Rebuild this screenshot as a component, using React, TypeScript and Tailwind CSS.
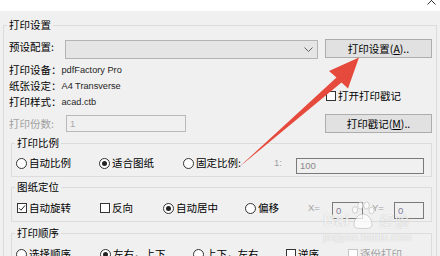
import React from 'react'

function GroupBox({ title, className, children }: { title: string; className?: string; children: React.ReactNode }) {
  return (
    <fieldset className={`border border-[#dcdcdc] ${className ?? ''}`}>
      <legend className="ml-[3px] px-[2px] leading-[12px]">{title}</legend>
      {children}
    </fieldset>
  )
}

function Radio({ label, checked, className }: { label: string; checked?: boolean; className?: string }) {
  return (
    <div className={`flex items-center h-[12px] shrink-0 ${className ?? ''}`}>
      <span className="w-[11px] h-[11px] rounded-full border border-[#333333] bg-white flex items-center justify-center shrink-0">
        {checked && <span className="w-[5px] h-[5px] rounded-full bg-[#222222]" />}
      </span>
      <span className="ml-[2px] whitespace-nowrap">{label}</span>
    </div>
  )
}

function Check({ label, checked, disabled, className }: { label: string; checked?: boolean; disabled?: boolean; className?: string }) {
  return (
    <div className={`flex items-center h-[12px] shrink-0 ${className ?? ''}`}>
      <span
        className={`w-[10px] h-[10px] border bg-white flex items-center justify-center shrink-0 ${
          disabled ? 'border-[#c4c4c4]' : 'border-[#333333]'
        }`}
      >
        {checked && (
          <svg width="8" height="8" viewBox="0 0 8 8">
            <path d="M1 4.2 L3 6.2 L7 1.5" fill="none" stroke="#222" strokeWidth="1" />
          </svg>
        )}
      </span>
      <span className={`ml-[2px] whitespace-nowrap ${disabled ? 'text-[#a0a0a0]' : ''}`}>{label}</span>
    </div>
  )
}

function Button({ children, className }: { children: React.ReactNode; className?: string }) {
  return (
    <div
      className={`w-[107px] h-[19px] bg-[#e1e1e1] border border-[#adadad] flex items-center justify-center whitespace-nowrap ${
        className ?? ''
      }`}
    >
      {children}
    </div>
  )
}

function InfoLine({ label, value }: { label: string; value: string }) {
  return (
    <div className="h-[16px] flex items-center whitespace-nowrap">
      <span>{label}</span>
      <span className="font-['Liberation_Sans',Arial,sans-serif] text-[9.2px] text-[#1f1f1f]">{value}</span>
    </div>
  )
}

export default function App() {
  return (
    <div className="relative w-[440px] h-[256px] overflow-hidden bg-[#f0f0f0] text-black text-[10.5px] leading-[12px] font-['Noto_Sans_CJK_SC',sans-serif]">
      {/* title bar bottom */}
      <div className="h-[11px] bg-white flex justify-end pr-[4px]">
        <svg width="9" height="5" viewBox="0 0 9 5">
          <path d="M0.5 -3.5 L8.5 4.5 M8.5 -3.5 L0.5 4.5" stroke="#333" strokeWidth="1" />
        </svg>
      </div>

      <div className="px-[3px] pt-[8px]">
        <GroupBox title="打印设置" className="pb-[20px]">
          {/* preset row */}
          <div className="flex items-start mt-[8px] pl-[5px]">
            <div className="w-[56px] pt-[2px] whitespace-nowrap">预设配置:</div>
            <div className="w-[253px] h-[19px] mt-[1px] bg-[#e5e5e5] border border-[#b4b4b4] flex items-center justify-end pr-[4px]">
              <svg width="9" height="5" viewBox="0 0 9 5">
                <path d="M0.5 0.5 L4.5 4.5 L8.5 0.5" fill="none" stroke="#606060" strokeWidth="1" />
              </svg>
            </div>
            <Button className="ml-[7px]">
              打印设置(<span className="underline underline-offset-1">A</span>)..
            </Button>
          </div>

          {/* device info */}
          <div className="flex mt-[3px] pl-[5px] pr-[4px]">
            <div className="flex-1">
              <InfoLine label="打印设备：" value="pdfFactory Pro" />
              <InfoLine label="纸张设定：" value="A4 Transverse" />
              <InfoLine label="打印样式：" value="acad.ctb" />
              <div className="mt-[5px] h-[17px] flex items-center text-[#a0a0a0]">
                <span className="w-[57px] whitespace-nowrap">打印份数:</span>
                <div className="w-[120px] h-[17px] border border-[#b9b9b9] flex items-center pl-[3px] font-['Liberation_Sans',Arial,sans-serif] text-[9.5px] text-[#a8a8a8]">
                  1
                </div>
              </div>
            </div>
            <div className="w-[107px]">
              <Check label="打开打印戳记" className="mt-[28px] ml-[1px]" />
              <Button className="mt-[12px] h-[18px]">
                打印戳记(<span className="underline underline-offset-1">M</span>)..
              </Button>
            </div>
          </div>

          {/* scale */}
          <GroupBox title="打印比例" className="mt-[4px] ml-[7px] mr-[4px] pb-[2px]">
            <div className="flex items-start mt-[8px] pl-[4px]">
              <Radio label="自动比例" className="w-[83px]" />
              <Radio label="适合图纸" checked className="w-[84px]" />
              <Radio label="固定比例:" className="w-[91px]" />
              <span className="w-[22px] font-['Liberation_Sans',Arial,sans-serif] text-[9.5px] text-[#a0a0a0]">1:</span>
              <div className="w-[128px] h-[16px] mt-[1px] border border-[#7a7a7a] flex items-center pl-[3px] font-['Liberation_Sans',Arial,sans-serif] text-[9.5px] text-[#8a8a8a]">
                100
              </div>
            </div>
          </GroupBox>

          {/* position */}
          <GroupBox title="图纸定位" className="mt-[4px] ml-[7px] mr-[4px] pb-[2px]">
            <div className="flex items-start mt-[9px] pl-[5px]">
              <Check label="自动旋转" checked className="w-[83px]" />
              <Check label="反向" className="w-[63px]" />
              <Radio label="自动居中" checked className="w-[82px]" />
              <Radio label="偏移" className="w-[63px]" />
              <span className="w-[24px] font-['Liberation_Sans',Arial,sans-serif] text-[9.5px] text-[#a0a0a0]">X=</span>
              <div className="w-[31px] h-[17px] border border-[#7a7a7a] flex items-center pl-[3px] font-['Liberation_Sans',Arial,sans-serif] text-[9.5px] text-[#7f7f9a]">
                0
              </div>
              <span className="w-[31px] pl-[9px] font-['Liberation_Sans',Arial,sans-serif] text-[9.5px] text-[#a0a0a0]">Y=</span>
              <div className="w-[30px] h-[17px] border border-[#7a7a7a] flex items-center pl-[3px] font-['Liberation_Sans',Arial,sans-serif] text-[9.5px] text-[#7f7f9a]">
                0
              </div>
            </div>
          </GroupBox>

          {/* order */}
          <GroupBox title="打印顺序" className="mt-[5px] ml-[7px] mr-[4px] pb-[10px]">
            <div className="flex items-start mt-[9px] pl-[4px]">
              <Radio label="选择顺序" className="w-[84px]" />
              <Radio label="左右，上下" checked className="w-[93px]" />
              <Radio label="上下，左右" className="w-[93px]" />
              <Check label="逆序" className="w-[62px]" />
              <Check label="逐份打印" disabled />
            </div>
          </GroupBox>
        </GroupBox>
      </div>

      {/* annotation arrow */}
      <svg className="absolute inset-0 pointer-events-none" width="440" height="256" viewBox="0 0 440 256">
        <polygon points="238,168 336.5,77.5 329,71 359,57.5 348,88.5 341.5,82.5" fill="#e64a3c" />
      </svg>

      {/* watermark */}
      <div className="absolute left-[323px] top-[200px] pointer-events-none text-white/80 [text-shadow:0_0_1px_rgba(0,0,0,0.25)]">
        <div className="flex items-end h-[29px]">
          <span className="font-['Liberation_Sans',Arial,sans-serif] font-bold text-[17px] leading-[17px]">Bai</span>
          <div className="w-[28px] h-[28px]">
            <svg width="28" height="28" viewBox="0 0 28 28" className="opacity-70">
              <ellipse cx="6" cy="9" rx="2.6" ry="3.3" fill="white" stroke="#a0a0a0" strokeWidth="0.6" />
              <ellipse cx="11.5" cy="4.5" rx="2.8" ry="3.5" fill="white" stroke="#a0a0a0" strokeWidth="0.6" />
              <ellipse cx="17.5" cy="4.5" rx="2.8" ry="3.5" fill="white" stroke="#a0a0a0" strokeWidth="0.6" />
              <ellipse cx="22.5" cy="9.5" rx="2.6" ry="3.3" fill="white" stroke="#a0a0a0" strokeWidth="0.6" />
              <path d="M5 24 C5 17 10 13 14 13 C18 13 23 17 23 24 C23 27 20 27.5 14 27.5 C8 27.5 5 27 5 24 Z" fill="white" stroke="#a0a0a0" strokeWidth="0.6" />
            </svg>
          </div>
          <span className="text-[15px] leading-[17px] ml-[2px]">经验</span>
        </div>
        <div className="mt-[2px] font-['Liberation_Sans',Arial,sans-serif] text-[11px] leading-[12px]">jingyan.baidu.com</div>
      </div>
    </div>
  )
}
